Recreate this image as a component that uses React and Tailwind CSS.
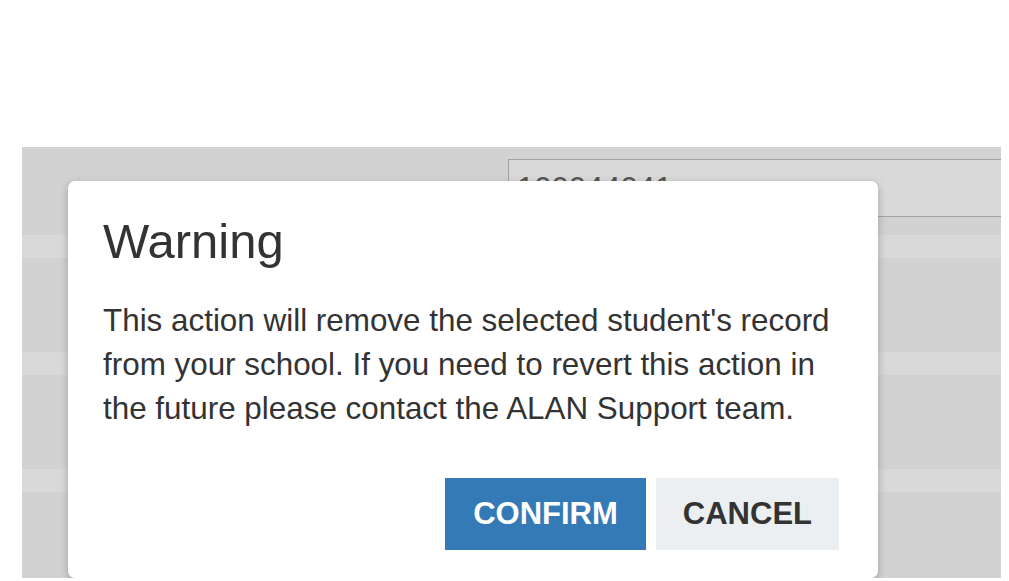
const stripes = [0, 1, 2];

const App = () => {
  return (
    <div className="w-[1009px] h-[581px] bg-white overflow-hidden font-['Liberation_Sans',Arial,sans-serif] text-[#333]">
      <div className="h-[147px]" />
      <div className="relative ml-[22px] w-[979px] h-[431px] bg-[#d2d2d2] overflow-hidden">
        {/* page behind the backdrop */}
        <div className="pt-[12px] pl-[486px]">
          <div className="w-[520px] h-[58px] bg-[#d9d9d9] border border-[#a3a3a3] pl-[8px] text-[31px] leading-[58px] text-[#555]">
            100044041
          </div>
        </div>
        <div className="mt-[18px] flex flex-col">
          {stripes.map((i) => (
            <div key={i} className="flex flex-col">
              <div className="h-[23px] bg-[#d9d9d9]" />
              <div className="h-[94px]" />
            </div>
          ))}
        </div>

        {/* modal */}
        <div className="absolute left-[46px] top-[34px] w-[810px] h-[397px] bg-white rounded-[7px] shadow-[0_3px_9px_rgba(0,0,0,0.25)] pt-[34px] pl-[35px] pr-[39px]">
          <h4 className="text-[49px] leading-[53px]">Warning</h4>
          <p className="mt-[31px] w-[740px] text-[31.4px] leading-[44px]">
            This action will remove the selected student's record from your school. If you need to revert this action in the future please contact the ALAN Support team.
          </p>
          <div className="mt-[47px] flex justify-end gap-[10px]">
            <button className="h-[72px] px-[28px] bg-[#337ab7] text-white text-[31px] font-bold">
              CONFIRM
            </button>
            <button className="h-[72px] px-[27px] bg-[#eceff1] text-[#333] text-[31px] font-bold">
              CANCEL
            </button>
          </div>
        </div>
      </div>
    </div>
  );
};

export default App;
